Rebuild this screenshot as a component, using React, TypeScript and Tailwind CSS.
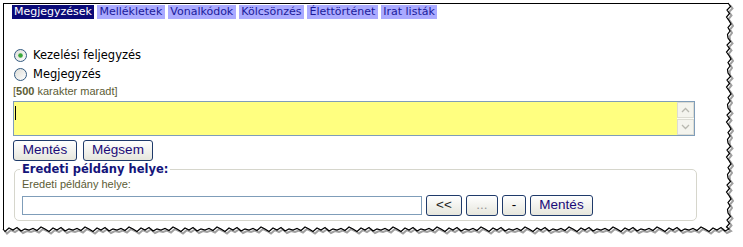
import React from "react";

const tabs = ["Megjegyzések", "Mellékletek", "Vonalkódok", "Kölcsönzés", "Élettörténet", "Irat listák"];

function Radio({ checked }: { checked?: boolean }) {
  return (
    <svg width="13" height="13" viewBox="0 0 13 13" className="shrink-0">
      <defs>
        <linearGradient id={checked ? "rg1" : "rg2"} x1="0" y1="0" x2="1" y2="1">
          <stop offset="0" stopColor="#dcdcd6" />
          <stop offset="1" stopColor="#ffffff" />
        </linearGradient>
      </defs>
      <circle cx="6.5" cy="6.5" r="6" fill={`url(#${checked ? "rg1" : "rg2"})`} stroke="#335a80" strokeWidth="1" />
      {checked && <circle cx="6.5" cy="6.5" r="2.3" fill="#3aa83a" />}
    </svg>
  );
}

function Btn({ children, className = "" }: { children: React.ReactNode; className?: string }) {
  return (
    <div
      className={`flex h-[21px] items-center justify-center rounded-[3px] border border-[#1f3a6a] bg-gradient-to-b from-[#ffffff] to-[#e6e6dd] text-[13.5px] ${className}`}
      style={{ fontFamily: '"Liberation Sans", Arial, sans-serif' }}
    >
      {children}
    </div>
  );
}

function Torn() {
  const right: string[] = [];
  let y = 3;
  let i = 0;
  const rx = [728, 730.5, 727, 729.5, 726.5, 729, 731, 728, 730, 727.5];
  while (y < 229) {
    right.push(`${rx[i % rx.length]},${y}`);
    y += 3.5;
    i++;
  }
  const bottom: string[] = [];
  let x = 729;
  const by = [229, 231, 227.5, 230, 228, 231.5, 229, 227, 230.5, 228.5, 230];
  i = 0;
  while (x > 3) {
    bottom.push(`${x},${by[i % by.length]}`);
    x -= 4;
    i++;
  }
  bottom.push(`3,229`);
  const pts = [...right, ...bottom].join(" ");
  const shadow = [...right, ...bottom]
    .map((p) => {
      const [a, b] = p.split(",").map(Number);
      return `${a + 2},${b + 2}`;
    })
    .join(" ");
  return (
    <svg className="pointer-events-none absolute left-0 top-0" width="743" height="247">
      <polyline points={shadow} fill="none" stroke="#a0a0a0" strokeWidth="2" />
      <polyline points={pts} fill="none" stroke="#000" strokeWidth="1.2" />
    </svg>
  );
}

export default function App() {
  return (
    <div className="relative h-[247px] w-[743px] overflow-hidden bg-white">
      <div className="absolute left-[3px] top-[3px] h-[227px] w-[726px] border-l border-t border-black bg-white">
        <div
          className="ml-[8px] mt-[1px] flex gap-[3px] text-[11px] leading-[14px]"
          style={{ fontFamily: '"DejaVu Sans", Verdana, sans-serif' }}
        >
          {tabs.map((t, i) => (
            <div
              key={t}
              className={i === 0 ? "bg-[#0a0a78] px-[2px] text-white" : "bg-[#aaaaff] px-[2.5px] text-[#1a1a9a]"}
            >
              {t}
            </div>
          ))}
        </div>

        <div className="ml-[10px] mt-[29px] flex flex-col gap-[5px] text-[11.5px] leading-[14px] text-black" style={{ fontFamily: '"DejaVu Sans", Verdana, sans-serif' }}>
          <div className="flex items-center gap-[6px]">
            <Radio checked />
            <span>Kezelési feljegyzés</span>
          </div>
          <div className="flex items-center gap-[6px]">
            <Radio />
            <span>Megjegyzés</span>
          </div>
        </div>

        <div className="ml-[9px] mt-[4px] text-[11px] leading-[13px] text-[#5c5c36]" style={{ fontFamily: '"Liberation Sans", Arial, sans-serif' }}>
          [<b>500</b> karakter maradt]
        </div>

        <div className="ml-[9px] mt-[3px] flex h-[35px] w-[682px] border border-[#7f9db9] bg-[#ffff80]">
          <div className="relative flex-1">
            <div className="absolute left-[1px] top-[4px] h-[14px] w-[1px] bg-black" />
          </div>
          <div className="flex w-[17px] flex-col gap-[1px] bg-[#fbfbf5]">
            <div className="flex flex-1 items-center justify-center border border-[#dcdcd4] bg-[#f4f4ee]">
              <svg width="9" height="6" viewBox="0 0 9 6"><polyline points="1,5 4.5,1.5 8,5" fill="none" stroke="#b8b8b0" strokeWidth="1.3" /></svg>
            </div>
            <div className="flex flex-1 items-center justify-center border border-[#dcdcd4] bg-[#f4f4ee]">
              <svg width="9" height="6" viewBox="0 0 9 6"><polyline points="1,1 4.5,4.5 8,1" fill="none" stroke="#b8b8b0" strokeWidth="1.3" /></svg>
            </div>
          </div>
        </div>

        <div className="ml-[9px] mt-[4px] flex gap-[6px]">
          <Btn className="w-[64px] text-[#1a0a78]">Mentés</Btn>
          <Btn className="w-[70px] text-[#1a0a78]">Mégsem</Btn>
        </div>

        <div className="relative ml-[10px] mt-[8px] h-[52px] w-[683px] rounded-[5px] border border-[#d6d6cc]">
          <div
            className="absolute left-[5px] top-[-8px] bg-white px-[2px] text-[11.5px] font-bold leading-[14px] text-[#14147a]"
            style={{ fontFamily: '"DejaVu Sans", Verdana, sans-serif' }}
          >
            Eredeti példány helye:
          </div>
          <div className="ml-[7px] mt-[8px] text-[11px] leading-[13px] text-[#5c5c36]" style={{ fontFamily: '"Liberation Sans", Arial, sans-serif' }}>
            Eredeti példány helye:
          </div>
          <div className="ml-[7px] mt-[4px] flex items-center gap-[4px]">
            <div className="h-[19px] w-[400px] border border-[#7f9db9] bg-white" />
            <Btn className="w-[36px] text-[#222222]">&lt;&lt;</Btn>
            <Btn className="w-[32px] text-[#9a9a9a]">...</Btn>
            <Btn className="w-[24px] text-black">-</Btn>
            <Btn className="w-[63px] text-[#1a0a78]">Mentés</Btn>
          </div>
        </div>
      </div>
      <div className="absolute left-[731px] top-0 h-[247px] w-[12px] bg-white" />
      <Torn />
    </div>
  );
}
